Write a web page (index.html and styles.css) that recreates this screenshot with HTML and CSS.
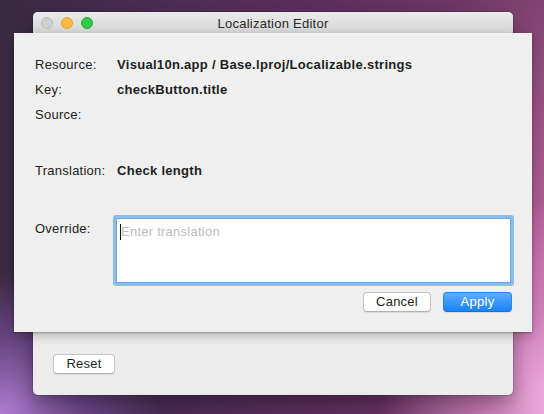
FILE: index.html
```html
<!DOCTYPE html>
<html>
<head>
<meta charset="utf-8">
<link rel="stylesheet" href="styles.css">
</head>
<body>
<div class="desktop">
  <div class="window">
    <div class="titlebar">
      <div class="lights">
        <span class="light close"></span>
        <span class="light min"></span>
        <span class="light max"></span>
      </div>
      <div class="title">Localization Editor</div>
    </div>
    <div class="window-body">
      <div class="textbox"></div>
      <div class="reset-row">
        <button class="btn">Reset</button>
      </div>
    </div>
  </div>

  <div class="sheet">
    <div class="rows">
      <div class="row"><div class="label">Resource:</div><div class="value">Visual10n.app / Base.lproj/Localizable.strings</div></div>
      <div class="row"><div class="label">Key:</div><div class="value">checkButton.title</div></div>
      <div class="row"><div class="label">Source:</div><div class="value"></div></div>
      <div class="row row-translation"><div class="label">Translation:</div><div class="value">Check length</div></div>
      <div class="row row-override">
        <div class="label">Override:</div>
        <div class="field"><span class="caret"></span><span class="placeholder">Enter translation</span></div>
      </div>
    </div>
    <div class="actions">
      <button class="btn">Cancel</button>
      <button class="btn primary">Apply</button>
    </div>
  </div>
</div>
</body>
</html>
```
FILE: styles.css
```css
* { box-sizing: border-box; }
html, body { margin: 0; padding: 0; }
body {
  width: 544px;
  height: 414px;
  overflow: hidden;
  font-family: "Liberation Sans", Arial, sans-serif;
  font-size: 13px;
  letter-spacing: 0.25px;
  color: #222;
}
.desktop {
  position: relative;
  width: 544px;
  height: 414px;
  background:
    radial-gradient(ellipse 180px 200px at 560px 400px, rgba(245,180,230,1) 0%, rgba(230,150,210,0.6) 45%, rgba(200,110,180,0) 100%),
    radial-gradient(ellipse 160px 140px at 0px 414px, rgba(175,125,210,1) 0%, rgba(140,90,180,0.6) 50%, rgba(120,70,160,0) 100%),
    radial-gradient(ellipse 200px 300px at 560px 260px, rgba(200,110,170,0.8) 0%, rgba(160,80,140,0) 100%),
    linear-gradient(to right, #3a2a42 0%, #4c2d55 30%, #5e2f5e 60%, #7a3d6c 100%);
}

/* parent window */
.window {
  position: absolute;
  left: 33px;
  top: 12px;
  width: 480px;
  height: 383px;
  border-radius: 5px;
  background: #ececec;
  box-shadow: 0 0 0 1px rgba(0,0,0,0.12), 0 8px 20px rgba(0,0,0,0.35);
  display: flex;
  flex-direction: column;
}
.titlebar {
  height: 22px;
  flex: none;
  border-radius: 5px 5px 0 0;
  background: linear-gradient(#ebebeb, #d5d5d5);
  border-bottom: 1px solid #b8b8b8;
  display: flex;
  align-items: center;
  justify-content: center;
  position: relative;
}
.lights {
  position: absolute;
  left: 8px;
  top: 5px;
  display: flex;
  gap: 8px;
}
.light {
  width: 12px;
  height: 12px;
  border-radius: 50%;
  display: block;
}
.light.close { background: #d0d0d0; border: 1px solid #bcbcbc; }
.light.min { background: #fdbc40; border: 1px solid #dea236; }
.light.max { background: #34c84a; border: 1px solid #27aa35; }
.title {
  font-size: 13px;
  color: #2a2a2a;
  padding-top: 1px;
}
.window-body {
  flex: 1;
  display: flex;
  flex-direction: column;
  padding: 0 21px 0 20px;
}
.textbox {
  height: 298px;
  flex: none;
  background: #fff;
  border: 1px solid #a8a8a8;
  border-top: none;
}
.reset-row {
  padding-top: 22px;
}
.btn {
  font-family: "Liberation Sans", Arial, sans-serif;
  font-size: 13px;
  letter-spacing: 0.25px;
  color: #1e1e1e;
  height: 20px;
  padding: 0 10px;
  background: #fff;
  border: 1px solid #c4c4c4;
  border-bottom-color: #b0b0b0;
  border-radius: 4px;
  box-shadow: 0 0.5px 1px rgba(0,0,0,0.08);
  line-height: 18px;
}
.reset-row .btn { width: 62px; }

/* sheet */
.sheet {
  position: absolute;
  left: 14px;
  top: 33px;
  width: 518px;
  height: 299px;
  background: #efefef;
  box-shadow: 0 4px 10px rgba(0,0,0,0.22), 0 1px 2px rgba(0,0,0,0.25);
  padding: 19px 20px 20px 21px;
  display: flex;
  flex-direction: column;
}
.rows {
  display: flex;
  flex-direction: column;
}
.row {
  display: flex;
  height: 24px;
  align-items: center;
  margin-bottom: 1px;
}
.row:nth-child(3) { margin-bottom: 0; }
.label {
  width: 82px;
  flex: none;
  color: #222;
}
.value {
  font-weight: bold;
  letter-spacing: 0.3px;
  color: #1e1e1e;
}
.row-translation {
  margin-top: 32px;
}
.row-override {
  margin-top: 33px;
  height: auto;
  align-items: flex-start;
}
.row-override .label {
  width: 78px;
  padding-top: 5px;
}
.field {
  flex: none;
  width: 401px;
  height: 71px;
  background: #fff;
  border: 3px solid #8cbcec;
  border-radius: 3px;
  box-shadow: inset 0 0 0 1px #6fa7e2;
  padding: 6px 0 0 4px;
  display: flex;
  align-items: flex-start;
  margin-top: -1px;
}
.caret {
  width: 1px;
  height: 16px;
  background: #111;
}
.placeholder {
  color: #bcbcbc;
  line-height: 16px;
}
.actions {
  margin-top: auto;
  display: flex;
  justify-content: flex-end;
  gap: 12px;
}
.actions .btn { width: 68px; padding: 0; }
.actions .btn.primary {
  width: 69px;
  color: #fff;
  background: linear-gradient(#5eacfc, #1a82fb);
  border: 1px solid #2a86ec;
  border-bottom-color: #1670d8;
}
```
